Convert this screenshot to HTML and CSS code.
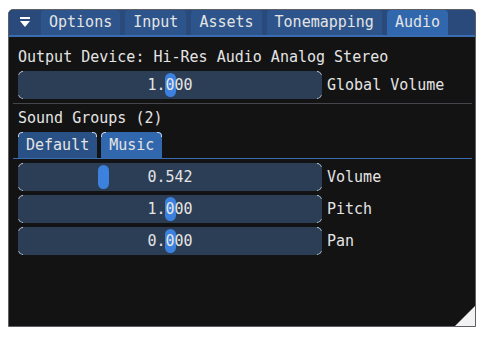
FILE: index.html
```html
<!DOCTYPE html>
<html lang="en">
<head>
  <meta charset="UTF-8">
  <meta name="viewport" content="width=device-width, initial-scale=1.0">
  <title>Audio</title>
  <link rel="stylesheet" href="styles.css">
</head>

<body>
  <div class="window">
    <div class="titlebar">
      <span class="collapse">
        <svg width="12" height="12" viewBox="0 0 12 12">
          <rect x="1" y="0" width="10" height="2" fill="#fff"/>
          <polygon points="1,4 11,4 6,10" fill="#fff"/>
        </svg>
      </span>
      <div class="tabs">
        <span class="tab">Options</span>
        <span class="tab">Input</span>
        <span class="tab">Assets</span>
        <span class="tab">Tonemapping</span>
        <span class="tab active">Audio</span>
      </div>
    </div>

    <div class="content">
      <p class="text">Output Device: Hi-Res Audio Analog Stereo</p>

      <div class="row first">
        <div class="slider">
          <span class="grab" style="left: 146.5px"></span>
          <span class="value">1.000</span>
        </div>
        <span class="label">Global Volume</span>
      </div>

      <div class="separator"></div>

      <p class="text">Sound Groups (2)</p>

      <div class="subtabs">
        <span class="subtab">Default</span>
        <span class="subtab active">Music</span>
      </div>

      <div class="rows">
        <div class="row">
          <div class="slider">
            <span class="grab" style="left: 80.3px"></span>
            <span class="value">0.542</span>
          </div>
          <span class="label">Volume</span>
        </div>
        <div class="row">
          <div class="slider">
            <span class="grab" style="left: 146.5px"></span>
            <span class="value">1.000</span>
          </div>
          <span class="label">Pitch</span>
        </div>
        <div class="row">
          <div class="slider">
            <span class="grab" style="left: 146.5px"></span>
            <span class="value">0.000</span>
          </div>
          <span class="label">Pan</span>
        </div>
      </div>
    </div>

    <!-- resize grip -->
    <span class="grip"></span>
  </div>
</body>
</html>
```

FILE: styles.css
```css
body {
  margin: 0;
  background: #fff;
  font-family: "DejaVu Sans Mono", "Liberation Mono", monospace;
  font-size: 15px;
  color: #e4e4e4;
}

.window {
  position: relative;
  box-sizing: border-box;
  margin: 9px 0 0 8px;
  width: 468px;
  height: 318px;
  background: #131313;
  border: 1px solid #5f5f68;
  border-radius: 5px 5px 0 0;
  overflow: hidden;
}

.titlebar {
  display: flex;
  height: 25px;
  background: #294a7a;
  border-bottom: 2px solid #3a6cb2;
}

.collapse {
  display: flex;
  align-items: center;
  justify-content: center;
  width: 32px;
}

.tabs {
  display: flex;
  gap: 5px;
}

.tab {
  display: flex;
  align-items: center;
  padding: 0 8px;
  background: #2d558b;
  border-radius: 4px 4px 0 0;
  line-height: 25px;
}

.tab.active {
  background: #3167ad;
}

.content {
  padding: 11px 9px 0 9px;
}

.text {
  margin: 0;
  line-height: 18px;
}

.row {
  display: flex;
  align-items: center;
  gap: 5px;
}

.row.first {
  margin-top: 5px;
}

.rows {
  display: flex;
  flex-direction: column;
  gap: 4px;
  margin-top: 4px;
}

.slider {
  position: relative;
  display: flex;
  align-items: center;
  justify-content: center;
  width: 304px;
  height: 28px;
  background: #2c3e56;
  border-radius: 5px;
}

/* the light corner specks on frames */
.slider::before,
.slider::after,
.subtab::before,
.subtab::after {
  content: "";
  position: absolute;
  top: 0;
  width: 5px;
  box-sizing: border-box;
  border: 1px solid rgba(255, 255, 255, 0.75);
  -webkit-mask-image: linear-gradient(#000 0 4px, transparent 4px calc(100% - 4px), #000 calc(100% - 4px));
  mask-image: linear-gradient(#000 0 4px, transparent 4px calc(100% - 4px), #000 calc(100% - 4px));
}

.slider::before {
  left: 0;
  bottom: 0;
  border-right: none;
  border-radius: 5px 0 0 5px;
}

.slider::after {
  right: 0;
  bottom: 0;
  border-left: none;
  border-radius: 0 5px 5px 0;
}

.grab {
  position: absolute;
  top: 2px;
  width: 11px;
  height: 24px;
  background: #3b81dd;
  border-radius: 6px;
}

.value {
  position: relative;
  line-height: 18px;
}

.label {
  line-height: 18px;
}

.separator {
  height: 1px;
  margin: 4px -6px 5px -5px;
  background: #45454c;
}

.subtabs {
  display: flex;
  gap: 4px;
  margin: 5px -6px 0 -5px;
  padding-left: 5px;
  border-bottom: 1px solid #3a6cb2;
}

.subtab {
  position: relative;
  padding: 0 8px;
  line-height: 26px;
  background: #2a5185;
  border-radius: 4px 4px 0 0;
}

.subtab.active {
  background: #3167ad;
}

.subtab::before {
  left: 0;
  height: 5px;
  border-right: none;
  border-bottom: none;
  border-radius: 4px 0 0 0;
}

.subtab::after {
  right: 0;
  height: 5px;
  border-left: none;
  border-bottom: none;
  border-radius: 0 4px 0 0;
}

.grip {
  position: absolute;
  right: 0;
  bottom: 0;
  width: 20px;
  height: 20px;
  background: #f2f2f2;
  clip-path: polygon(100% 0, 100% 100%, 0 100%);
}
```
